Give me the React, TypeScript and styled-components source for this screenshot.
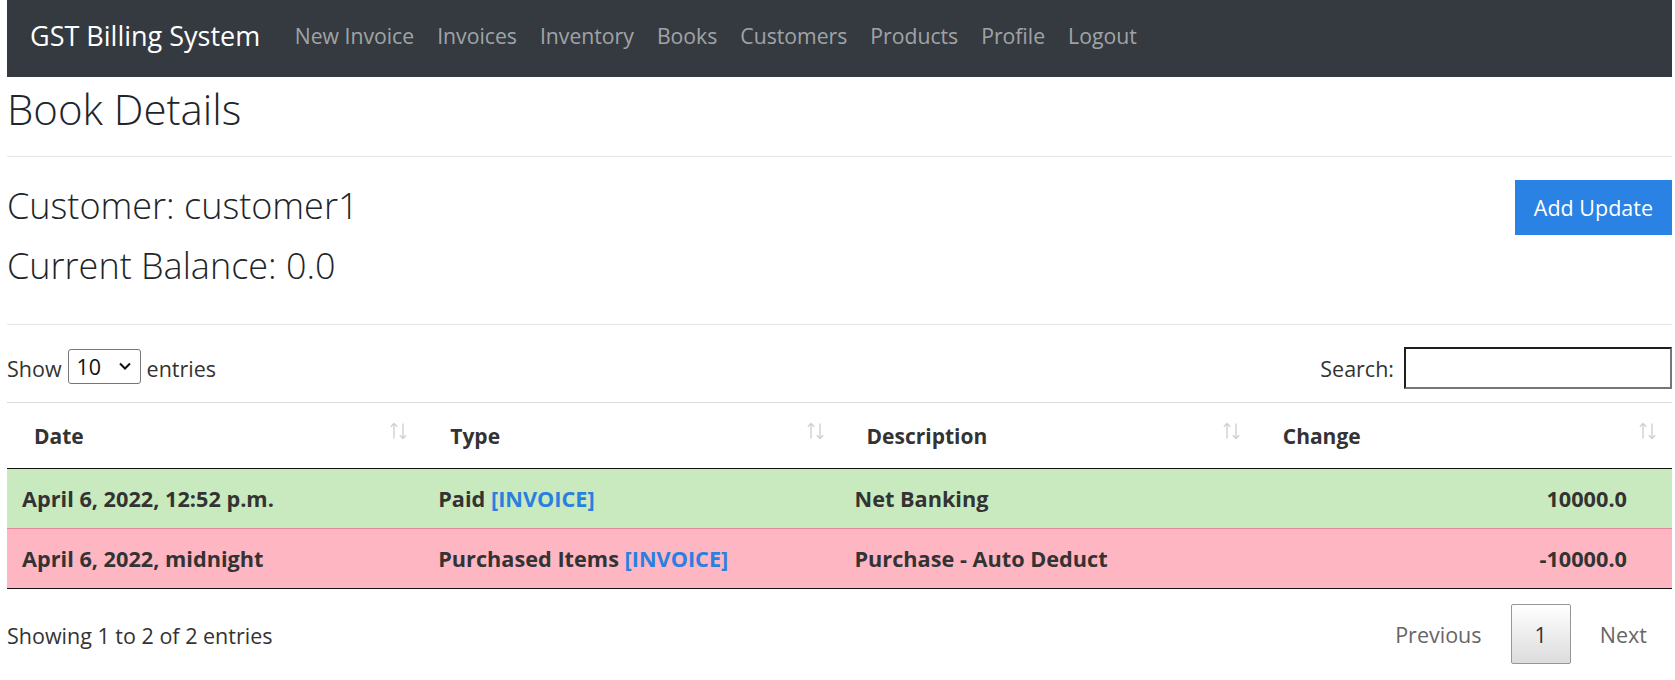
import React from "react";
import styled, { createGlobalStyle } from "styled-components";

const GlobalStyle = createGlobalStyle`
  body {
    margin: 0;
    font-family: "Open Sans", "Noto Sans", sans-serif;
    color: #212529;
    background: #fff;
  }
  * {
    box-sizing: border-box;
  }
`;

interface Entry {
  date: string;
  type: string;
  invoice: boolean;
  description: string;
  change: string;
  tone: "credit" | "debit";
}

const entries: Entry[] = [
  {
    date: "April 6, 2022, 12:52 p.m.",
    type: "Paid",
    invoice: true,
    description: "Net Banking",
    change: "10000.0",
    tone: "credit",
  },
  {
    date: "April 6, 2022, midnight",
    type: "Purchased Items",
    invoice: true,
    description: "Purchase - Auto Deduct",
    change: "-10000.0",
    tone: "debit",
  },
];

const navLinks = [
  "New Invoice",
  "Invoices",
  "Inventory",
  "Books",
  "Customers",
  "Products",
  "Profile",
  "Logout",
];

const columns = ["Date", "Type", "Description", "Change"];

function SortIcon() {
  return (
    <SortGlyph width="20" height="18" viewBox="0 0 20 18">
      <path d="M5 1.5v15M1.8 4.7L5 1.5l3.2 3.2" />
      <path d="M14 1.5v15M10.8 13.3L14 16.5l3.2-3.2" />
    </SortGlyph>
  );
}

export default function App() {
  return (
    <>
      <GlobalStyle />
      <Page>
        <Navbar>
          <Brand>GST Billing System</Brand>
          <NavList>
            {navLinks.map((link) => (
              <NavLink key={link}>{link}</NavLink>
            ))}
          </NavList>
        </Navbar>

        <Title>Book Details</Title>
        <Rule />

        <Summary>
          <div>
            <SummaryLine>Customer: customer1</SummaryLine>
            <SummaryLine>Current Balance: 0.0</SummaryLine>
          </div>
          <PrimaryButton>Add Update</PrimaryButton>
        </Summary>
        <Rule />

        <Controls>
          <LengthControl>
            Show
            <SelectWrap>
              <LengthSelect defaultValue="10">
                <option value="10">10</option>
                <option value="25">25</option>
                <option value="50">50</option>
              </LengthSelect>
              <Chevron width="14" height="10" viewBox="0 0 14 10">
                <path d="M2 2.5l5 5 5-5" />
              </Chevron>
            </SelectWrap>
            entries
          </LengthControl>
          <SearchControl>
            Search:
            <SearchInput type="search" />
          </SearchControl>
        </Controls>

        <Table>
          <colgroup>
            {columns.map((c) => (
              <col key={c} style={{ width: "25%" }} />
            ))}
          </colgroup>
          <thead>
            <tr>
              {columns.map((c) => (
                <HeadCell key={c}>
                  <HeadInner>
                    <span>{c}</span>
                    <SortIcon />
                  </HeadInner>
                </HeadCell>
              ))}
            </tr>
          </thead>
          <tbody>
            {entries.map((e, i) => (
              <Row key={i} tone={e.tone} first={i === 0}>
                <Cell>{e.date}</Cell>
                <Cell>
                  {e.type} {e.invoice && <InvoiceLink>[INVOICE]</InvoiceLink>}
                </Cell>
                <Cell>{e.description}</Cell>
                <Cell align="right">{e.change}</Cell>
              </Row>
            ))}
          </tbody>
        </Table>

        <Footer>
          <Info>Showing 1 to 2 of 2 entries</Info>
          <Pager>
            <PageButton>Previous</PageButton>
            <PageButton current>1</PageButton>
            <PageButton>Next</PageButton>
          </Pager>
        </Footer>
      </Page>
    </>
  );
}

const Page = styled.div`
  padding: 0 3px 0 7px;
`;

const Navbar = styled.nav`
  height: 77px;
  background: #343a40;
  display: flex;
  align-items: center;
  padding: 0 0 6px 23px;
`;

const Brand = styled.span`
  color: #fff;
  font-size: 27px;
  margin-right: 23px;
`;

const NavList = styled.div`
  display: flex;
`;

const NavLink = styled.span`
  color: rgba(255, 255, 255, 0.55);
  font-size: 21.2px;
  padding: 0 11.5px;
`;

const Title = styled.h1`
  font-size: 42px;
  font-weight: 300;
  line-height: 50px;
  margin: 7px 0 22px;
`;

const Rule = styled.hr`
  margin: 0;
  border: 0;
  border-top: 1px solid #e6e6e6;
`;

const Summary = styled.div`
  display: flex;
  justify-content: space-between;
  align-items: flex-start;
  padding: 26px 0 35px;
`;

const SummaryLine = styled.h2`
  font-size: 36px;
  font-weight: 300;
  line-height: 46px;
  margin: 0 0 14px;

  &:last-child {
    margin-bottom: 0;
  }
`;

const PrimaryButton = styled.button`
  margin-top: -3px;
  height: 55px;
  padding: 0 19px;
  border: none;
  border-radius: 0;
  background: #2a82e4;
  color: #fff;
  font-family: inherit;
  font-size: 21.5px;
`;

const Controls = styled.div`
  display: flex;
  justify-content: space-between;
  align-items: center;
  padding: 22px 0 13px;
  font-size: 21.5px;
  color: #333;
`;

const LengthControl = styled.label`
  display: flex;
  align-items: center;
  gap: 6px;
`;

const SelectWrap = styled.span`
  position: relative;
  display: inline-flex;
  margin-top: -4px;
`;

const LengthSelect = styled.select`
  appearance: none;
  width: 73px;
  height: 35px;
  padding: 0 0 0 8px;
  border: 1px solid #767676;
  border-radius: 3px;
  background: #fff;
  font-family: inherit;
  font-size: 21.5px;
  color: #111;
`;

const Chevron = styled.svg`
  position: absolute;
  right: 9px;
  top: 12px;
  fill: none;
  stroke: #111;
  stroke-width: 2;
  pointer-events: none;
`;

const SearchControl = styled.label`
  display: flex;
  align-items: center;
  gap: 10px;
`;

const SearchInput = styled.input`
  width: 268px;
  height: 42px;
  border-style: solid;
  border-width: 2px;
  border-color: #1f1f1f #767676 #767676 #1f1f1f;
  font-family: inherit;
  font-size: 20px;
  outline: none;
`;

const Table = styled.table`
  width: 100%;
  table-layout: fixed;
  border-collapse: collapse;
  border-top: 1px solid #dcdcdc;
  border-bottom: 1px solid #111;
  font-weight: 700;
  color: #333;
`;

const HeadCell = styled.th`
  height: 66px;
  padding: 0 14px 0 27px;
  text-align: left;
  font-size: 21px;
  border-bottom: 1px solid #111;
`;

const HeadInner = styled.div`
  display: flex;
  justify-content: space-between;
  align-items: center;
`;

const SortGlyph = styled.svg`
  margin-bottom: 10px;
  fill: none;
  stroke: #d0d0d0;
  stroke-width: 1.4;
`;

const Row = styled.tr<{ tone: "credit" | "debit"; first: boolean }>`
  height: 60px;
  font-size: 21.7px;
  background: ${(p) => (p.tone === "credit" ? "#c9eabe" : "#ffb6c3")};
  border-top: ${(p) => (p.first ? "none" : "1px solid #e48a96")};
`;

const Cell = styled.td<{ align?: "left" | "right" }>`
  padding: 0 45px 0 15px;
  text-align: ${(p) => p.align || "left"};
  white-space: nowrap;
`;

const InvoiceLink = styled.a`
  color: #2a7fe0;
  text-decoration: none;
`;

const Footer = styled.div`
  display: flex;
  justify-content: space-between;
  align-items: center;
  padding-top: 15px;
  font-size: 21.5px;
  color: #333;
`;

const Info = styled.div`
  padding-top: 2px;
`;

const Pager = styled.div`
  display: flex;
  align-items: center;
  gap: 4px;
`;

const PageButton = styled.span<{ current?: boolean }>`
  display: inline-flex;
  align-items: center;
  justify-content: center;
  height: 60px;
  padding: 0 ${(p) => (p.current ? "23px" : "24px")};
  color: ${(p) => (p.current ? "#333" : "#666")};
  border: 1px solid ${(p) => (p.current ? "#979797" : "transparent")};
  border-radius: 2px;
  background: ${(p) =>
    p.current ? "linear-gradient(to bottom, #fff 0%, #dcdcdc 100%)" : "none"};
`;
